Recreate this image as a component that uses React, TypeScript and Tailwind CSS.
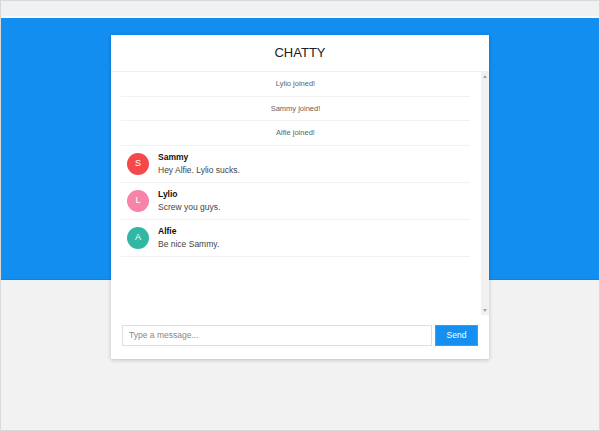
const systemMessages = ["Lylio joined!", "Sammy joined!", "Alfie joined!"];

const messages = [
  { name: "Sammy", text: "Hey Alfie. Lylio sucks.", color: "bg-[#f5484b]" },
  { name: "Lylio", text: "Screw you guys.", color: "bg-[#f883a9]" },
  { name: "Alfie", text: "Be nice Sammy.", color: "bg-[#32b7a5]" },
];

function Scrollbar() {
  return (
    <div className="flex w-[8px] shrink-0 flex-col items-center justify-between bg-[#f1f1f1] py-[3px]">
      <div className="h-0 w-0 border-x-[2.5px] border-b-[3px] border-x-transparent border-b-[#a3a3a3]" />
      <div className="h-0 w-0 border-x-[2.5px] border-t-[3px] border-x-transparent border-t-[#a3a3a3]" />
    </div>
  );
}

export default function App() {
  return (
    <div
      className="flex h-[431px] w-[600px] flex-col overflow-hidden border border-[#d9d9d9] bg-[#f2f2f2]"
      style={{ fontFamily: '"Liberation Sans", Arial, sans-serif' }}
    >
      <div className="h-[15px] shrink-0 border-b-2 border-[#f9fafb] bg-[#f0f1f3] box-content" />
      <div className="h-[262px] shrink-0 border-b border-[#0f82dc] bg-[#128ef1]" />

      <div className="mx-auto -mt-[245px] flex h-[324px] w-[378px] flex-col bg-white shadow-[0_1px_4px_rgba(0,0,0,0.22)]">
        <div className="flex h-[37px] shrink-0 items-center justify-center border-b border-[#efefef] text-[13px] text-[#222]">
          CHATTY
        </div>

        <div className="flex h-[243px] shrink-0">
          <div className="flex-1 pl-[10px] pr-[11px]">
            {systemMessages.map((m) => (
              <div
                key={m}
                className="flex h-[24.5px] items-center justify-center border-b border-[#f1f1f1] text-[7.5px] text-[#5f5f5f]"
              >
                {m}
              </div>
            ))}
            {messages.map((m) => (
              <div key={m.name} className="flex h-[37px] items-center gap-[9px] border-b border-[#f1f1f1] pl-[6px]">
                <div
                  className={`flex h-[22px] w-[22px] items-center justify-center rounded-full text-[9px] text-white ${m.color}`}
                >
                  {m.name[0]}
                </div>
                <div className="flex flex-col gap-[2px] leading-[11px]">
                  <span className="text-[8.5px] font-bold text-[#111]">{m.name}</span>
                  <span className="text-[8.5px] text-[#444]">{m.text}</span>
                </div>
              </div>
            ))}
          </div>
          <Scrollbar />
        </div>

        <div className="flex gap-[3px] pl-[11px] pr-[11px] pt-[10px]">
          <div className="flex h-[21px] flex-1 items-center border border-[#dedede] pl-[6px] text-[8.5px] text-[#888]">
            Type a message...
          </div>
          <div className="flex h-[21px] w-[43px] items-center justify-center border border-[#3a9ff0] bg-[#1590f0] text-[8.5px] text-white">
            Send
          </div>
        </div>
      </div>
    </div>
  );
}
